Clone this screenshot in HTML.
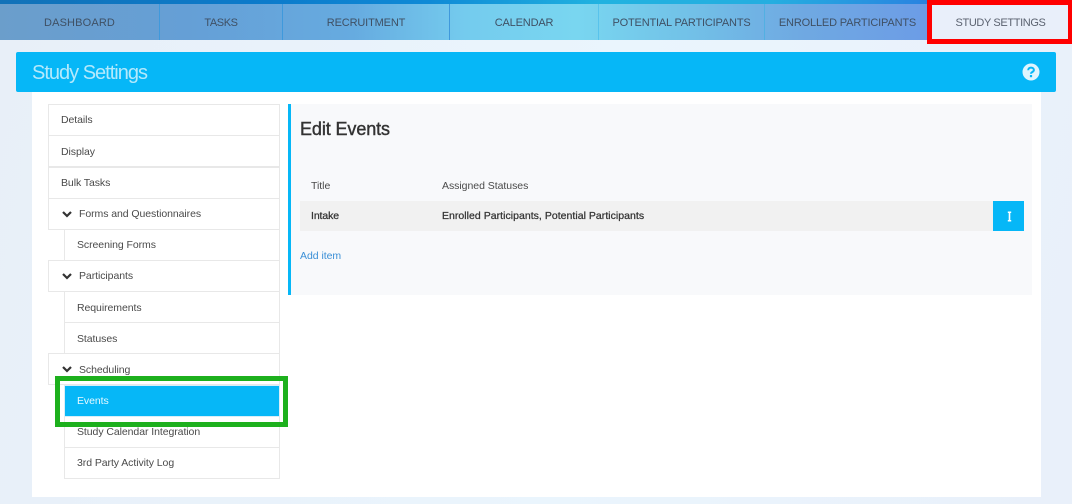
<!DOCTYPE html>
<html><head><meta charset="utf-8"><style>
html,body{margin:0;padding:0}
body{width:1072px;height:504px;position:relative;overflow:hidden;background:linear-gradient(100deg,#e8eff8 0%,#eaf5fd 55%,#e9f0fa 100%);font-family:"Liberation Sans",sans-serif;color:#444}
div,a,span{position:absolute;box-sizing:border-box;white-space:nowrap}
#strip{left:0;top:0;width:1072px;height:4px;background:linear-gradient(90deg,#1272b8 0,#0c7bcb 25%,#0f8ad6 40%,#21b2e0 56%,#25aee0 72%,#2a7ee0 88%,#2a7ee0 100%)}
#tabs{left:0;top:4px;width:930px;height:36px;background:linear-gradient(90deg,#6b9ecb 0,#659fd6 20%,#66abe0 38%,#74cbee 50%,#79d6f0 62%,#72c3e8 73%,#6fa9e2 86%,#6c9ce6 100%)}
.sep{top:4px;width:1px;height:36px;background:#3f99dc}
.t{top:4px;height:36px;line-height:38px;text-align:center;font-size:11px;color:#3f5064;filter:blur(.25px)}
#red{left:927px;top:0;width:145px;height:44px;background:#e9effa;border:solid #f00;border-width:5px 4px 5px 5px}
#hdr{left:16px;top:52px;width:1040px;height:40px;background:#06b7f7;border-radius:2px}
#hdr span{left:16px;top:9px;font-size:20px;line-height:24px;color:#b4e9fc;letter-spacing:-1px}
#main{left:32px;top:92px;width:1009px;height:405px;background:#fff}
.m{left:48px;width:232px;height:32px;border:1px solid #e8e8e8;background:#fff;font-size:10.5px;line-height:30px;padding-left:12px;color:#4a4a4a;letter-spacing:-.07px}
.s{left:64px;width:216px;padding-left:12px}
.i{padding-left:30px}
.i svg{position:absolute;left:12px;top:11px}
#panel{left:288px;top:104px;width:744px;height:191px;background:#f8f9fb;border-left:3px solid #06b7f7}
h1{position:absolute;margin:0;left:300px;top:118px;font-size:18px;line-height:22px;font-weight:normal;color:#333;-webkit-text-stroke:.4px #333;letter-spacing:-.1px}
.c{font-size:10.5px;line-height:14px;letter-spacing:-.04px;color:#4a4a4a}
#row{left:300px;top:201px;width:693px;height:30px;background:#f1f1f1}
#btn{left:993px;top:201px;width:31px;height:30px;background:#06b7f7}
#grn{left:55px;top:376px;width:233px;height:51px;border:5px solid #1db01d}
</style></head><body>
<div id="strip"></div>
<div id="tabs"></div>
<div class="sep" style="left:159px"></div>
<div class="sep" style="left:282px"></div>
<div class="sep" style="left:449px"></div>
<div class="sep" style="left:598px;background:#58c3ec"></div>
<div class="sep" style="left:764px;background:#52b0e2"></div>
<div class="t" style="left:0;width:159px;letter-spacing:.15px">DASHBOARD</div>
<div class="t" style="left:160px;width:122px;letter-spacing:-.4px">TASKS</div>
<div class="t" style="left:283px;width:166px;letter-spacing:-.15px">RECRUITMENT</div>
<div class="t" style="left:450px;width:148px;letter-spacing:-.16px">CALENDAR</div>
<div class="t" style="left:599px;width:165px;letter-spacing:-.18px">POTENTIAL PARTICIPANTS</div>
<div class="t" style="left:765px;width:165px;letter-spacing:-.16px">ENROLLED PARTICIPANTS</div>
<div id="red"></div>
<div class="t" style="left:932px;width:137px;color:#5b6270;letter-spacing:-.37px">STUDY SETTINGS</div>
<div id="main"></div>
<div id="hdr"><span>Study Settings</span>
<svg style="position:absolute;left:1006px;top:11px" width="18" height="18" viewBox="0 0 18 18"><circle cx="9" cy="9" r="8.5" fill="#dff5fe"/><path d="M6.200 7.200C6.200 5.500 7.500 4.600 9 4.600c1.600 0 2.900 1 2.900 2.400 0 2-2.900 2-2.900 3.700" fill="none" stroke="#06b7f7" stroke-width="2"/><rect x="7.900" y="12" width="2.200" height="2.200" fill="#06b7f7"/></svg></div>

<div class="m" style="top:104px">Details</div>
<div class="m" style="top:135px;line-height:32px">Display</div>
<div class="m" style="top:167px">Bulk Tasks</div>
<div class="m i" style="top:198px"><svg width="12" height="9" viewBox="0 0 12 9"><path d="M2 2l4 4 4-4" fill="none" stroke="#333" stroke-width="2.200"/></svg>Forms and Questionnaires</div>
<div class="m s" style="top:229px">Screening Forms</div>
<div class="m i" style="top:260px"><svg width="12" height="9" viewBox="0 0 12 9"><path d="M2 2l4 4 4-4" fill="none" stroke="#333" stroke-width="2.200"/></svg>Participants</div>
<div class="m s" style="top:291px;line-height:32px">Requirements</div>
<div class="m s" style="top:322px;line-height:32px">Statuses</div>
<div class="m i" style="top:353px;line-height:32px"><svg width="12" height="9" viewBox="0 0 12 9"><path d="M2 2l4 4 4-4" fill="none" stroke="#333" stroke-width="2.200"/></svg>Scheduling</div>
<div class="m s" style="top:416px">Study Calendar Integration</div>
<div class="m s" style="top:447px">3rd Party Activity Log</div>
<div class="m s" style="top:385px;height:32px;background:#06b7f7;color:#e6f8ff;border-color:#d8eef8;width:216px">Events</div>
<div id="grn"></div>

<div id="panel"></div>
<h1>Edit Events</h1>
<div class="c" style="left:311px;top:179px">Title</div>
<div class="c" style="left:442px;top:179px">Assigned Statuses</div>
<div id="row"></div>
<div class="c" style="left:311px;top:209px;color:#333;-webkit-text-stroke:.25px #333;letter-spacing:-.1px">Intake</div>
<div class="c" style="left:442px;top:209px;color:#333;-webkit-text-stroke:.25px #333;letter-spacing:.03px">Enrolled Participants, Potential Participants</div>
<div id="btn"><svg style="position:absolute;left:13.500px;top:9.500px" width="5" height="11" viewBox="0 0 5 11"><path d="M.8 .5h3.400v1.500H3.300v7H4.200v1.500H.8V9h.9V2h-.9z" fill="#fff"/></svg></div>
<div class="c" style="left:300px;top:249px;color:#3a8fd6">Add item</div>
</body></html>
